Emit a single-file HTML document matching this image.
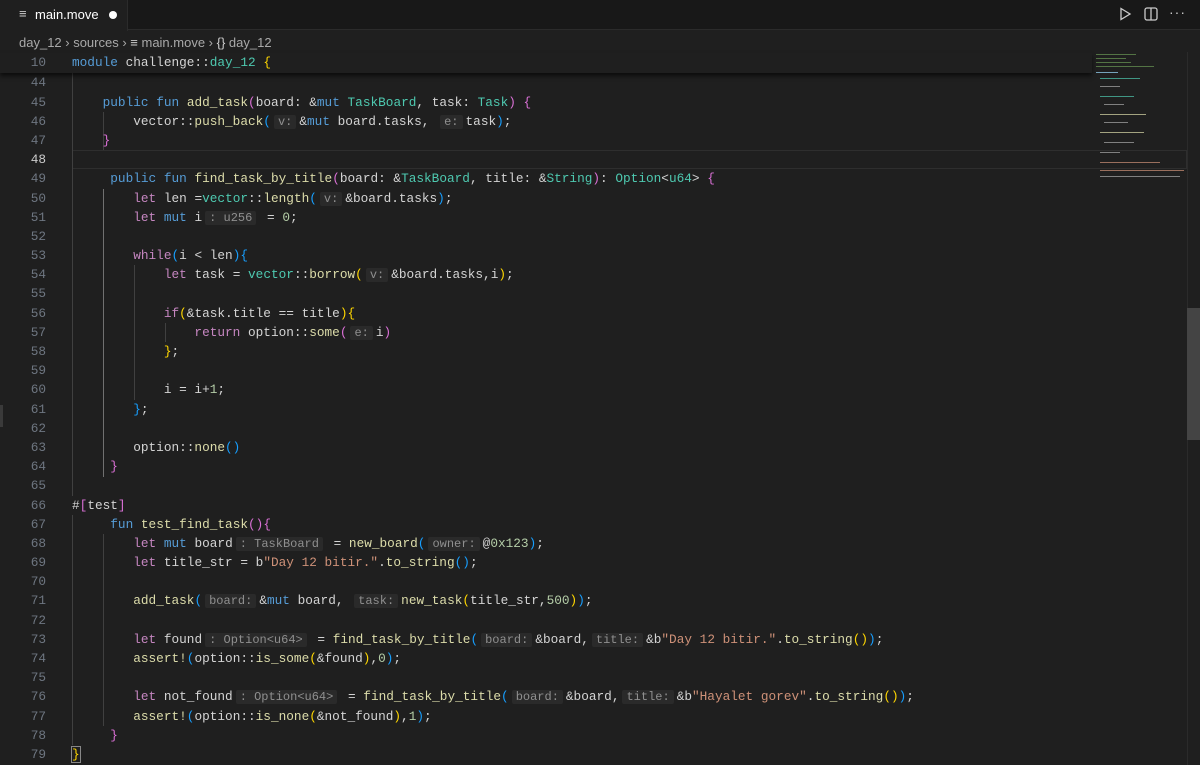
<!DOCTYPE html>
<html><head><meta charset="utf-8">
<style>
*{margin:0;padding:0;box-sizing:border-box}
html,body{width:1200px;height:765px;overflow:hidden}
body{background:#1f1f1f;position:relative;font-family:"Liberation Sans",sans-serif}
#tabbar{position:absolute;left:0;top:0;width:1200px;height:30px;background:#181818;border-bottom:1px solid #2b2b2b}
#tab{position:absolute;left:0;top:0;width:128px;height:31px;background:#1f1f1f;border-right:1px solid #2b2b2b;color:#fff;font-size:13px}
#crumb{position:absolute;left:19px;top:35px;font-size:13px;color:#a9a9a9;white-space:pre}
.code{font-family:"Liberation Mono",monospace;font-size:12.75px;color:#d4d4d4}
.row{height:19.2px;line-height:19.2px;white-space:pre}
#nums{position:absolute;left:0;width:46px;text-align:right;color:#6e7681}
#src{position:absolute;left:72px;width:1020px}
.k{color:#569cd6}.c{color:#c586c0}.f{color:#dcdcaa}.t{color:#4ec9b0}.n{color:#b5cea8}.s{color:#ce9178}
.b1{color:#ffd700}.b2{color:#da70d6}.b3{color:#179fff}
.h{color:#8f8f8f;background:#2a2a2a;font-size:12px;padding:0 4px;margin:0 3px;border-radius:2px}
.g{position:absolute;width:1px;background:#404040}
.gb{background:#707070}
</style></head><body>
<div id="tabbar"></div>
<div id="tab"><span style="position:absolute;left:19px;top:6px;color:#ccc;font-size:13px">≡</span><span style="position:absolute;left:35px;top:7px">main.move</span><span style="position:absolute;left:109px;top:11px;width:8px;height:8px;border-radius:50%;background:#fff"></span></div>
<svg style="position:absolute;left:1117px;top:6px" width="16" height="16" viewBox="0 0 16 16"><path d="M4 2.5 L13 8 L4 13.5 Z" fill="none" stroke="#ccc" stroke-width="1.3"/></svg>
<svg style="position:absolute;left:1143px;top:6px" width="16" height="16" viewBox="0 0 16 16"><rect x="2" y="2" width="12" height="12" rx="2" fill="none" stroke="#ccc" stroke-width="1.3"/><path d="M8 2V14" stroke="#ccc" stroke-width="1.3"/></svg>
<div style="position:absolute;left:1169px;top:4px;color:#ccc;font-size:14px;letter-spacing:1px">···</div>
<div id="crumb">day_12 › sources › <span style="color:#ccc">≡</span> main.move › <span style="color:#ccc">{}</span> day_12</div>

<div class="code row" style="position:absolute;left:0;top:52.5px;width:1092px;height:20px;box-shadow:0 3px 4px rgba(0,0,0,0.6);background:#1f1f1f;z-index:2"><span style="position:absolute;left:0;width:46px;text-align:right;color:#6e7681">10</span><span style="position:absolute;left:72px"><span class="k">module</span> challenge::<span class="t">day_12</span> <span class="b1">{</span></span></div>

<div style="position:absolute;left:72px;top:150.2px;width:1115px;height:19.2px;border:1px solid #2e2e2e"></div>

<div class="g" style="left:72px;top:73.4px;height:422.4px"></div>
<div class="g" style="left:72px;top:515px;height:230.4px"></div>
<div class="g" style="left:103px;top:111.8px;height:38.4px"></div>
<div class="g gb" style="left:103px;top:188.6px;height:288px"></div>
<div class="g" style="left:103px;top:534.2px;height:192px"></div>
<div class="g" style="left:134px;top:265.4px;height:134.4px"></div>
<div class="g" style="left:165px;top:323px;height:19.2px"></div>

<div id="nums" class="code" style="top:73.4px;color:#6e7681"><div class="row">44</div><div class="row">45</div><div class="row">46</div><div class="row">47</div><div class="row" style="color:#ccc">48</div><div class="row">49</div><div class="row">50</div><div class="row">51</div><div class="row">52</div><div class="row">53</div><div class="row">54</div><div class="row">55</div><div class="row">56</div><div class="row">57</div><div class="row">58</div><div class="row">59</div><div class="row">60</div><div class="row">61</div><div class="row">62</div><div class="row">63</div><div class="row">64</div><div class="row">65</div><div class="row">66</div><div class="row">67</div><div class="row">68</div><div class="row">69</div><div class="row">70</div><div class="row">71</div><div class="row">72</div><div class="row">73</div><div class="row">74</div><div class="row">75</div><div class="row">76</div><div class="row">77</div><div class="row">78</div><div class="row">79</div></div>

<div id="src" class="code" style="top:73.4px">
<div class="row"> </div>
<div class="row">    <span class="k">public</span> <span class="k">fun</span> <span class="f">add_task</span><span class="b2">(</span>board: &amp;<span class="k">mut</span> <span class="t">TaskBoard</span>, task: <span class="t">Task</span><span class="b2">)</span> <span class="b2">{</span></div>
<div class="row">        vector::<span class="f">push_back</span><span class="b3">(</span><span class="h">v:</span>&amp;<span class="k">mut</span> board.tasks, <span class="h">e:</span>task<span class="b3">)</span>;</div>
<div class="row">    <span class="b2">}</span></div>
<div class="row"> </div>
<div class="row">     <span class="k">public</span> <span class="k">fun</span> <span class="f">find_task_by_title</span><span class="b2">(</span>board: &amp;<span class="t">TaskBoard</span>, title: &amp;<span class="t">String</span><span class="b2">)</span>: <span class="t">Option</span>&lt;<span class="t">u64</span>&gt; <span class="b2">{</span></div>
<div class="row">        <span class="c">let</span> len =<span class="t">vector</span>::<span class="f">length</span><span class="b3">(</span><span class="h">v:</span>&amp;board.tasks<span class="b3">)</span>;</div>
<div class="row">        <span class="c">let</span> <span class="k">mut</span> i<span class="h">: u256</span> = <span class="n">0</span>;</div>
<div class="row"> </div>
<div class="row">        <span class="c">while</span><span class="b3">(</span>i &lt; len<span class="b3">){</span></div>
<div class="row">            <span class="c">let</span> task = <span class="t">vector</span>::<span class="f">borrow</span><span class="b1">(</span><span class="h">v:</span>&amp;board.tasks,i<span class="b1">)</span>;</div>
<div class="row"> </div>
<div class="row">            <span class="c">if</span><span class="b1">(</span>&amp;task.title == title<span class="b1">){</span></div>
<div class="row">                <span class="c">return</span> option::<span class="f">some</span><span class="b2">(</span><span class="h">e:</span>i<span class="b2">)</span></div>
<div class="row">            <span class="b1">}</span>;</div>
<div class="row"> </div>
<div class="row">            i = i+<span class="n">1</span>;</div>
<div class="row">        <span class="b3">}</span>;</div>
<div class="row"> </div>
<div class="row">        option::<span class="f">none</span><span class="b3">()</span></div>
<div class="row">     <span class="b2">}</span></div>
<div class="row"> </div>
<div class="row">#<span class="b2">[</span>test<span class="b2">]</span></div>
<div class="row">     <span class="k">fun</span> <span class="f">test_find_task</span><span class="b2">(){</span></div>
<div class="row">        <span class="c">let</span> <span class="k">mut</span> board<span class="h">: TaskBoard</span> = <span class="f">new_board</span><span class="b3">(</span><span class="h">owner:</span>@<span class="n">0x123</span><span class="b3">)</span>;</div>
<div class="row">        <span class="c">let</span> title_str = b<span class="s">"Day 12 bitir."</span>.<span class="f">to_string</span><span class="b3">()</span>;</div>
<div class="row"> </div>
<div class="row">        <span class="f">add_task</span><span class="b3">(</span><span class="h">board:</span>&amp;<span class="k">mut</span> board, <span class="h">task:</span><span class="f">new_task</span><span class="b1">(</span>title_str,<span class="n">500</span><span class="b1">)</span><span class="b3">)</span>;</div>
<div class="row"> </div>
<div class="row">        <span class="c">let</span> found<span class="h">: Option&lt;u64&gt;</span> = <span class="f">find_task_by_title</span><span class="b3">(</span><span class="h">board:</span>&amp;board,<span class="h">title:</span>&amp;b<span class="s">"Day 12 bitir."</span>.<span class="f">to_string</span><span class="b1">()</span><span class="b3">)</span>;</div>
<div class="row">        <span class="f">assert!</span><span class="b3">(</span>option::<span class="f">is_some</span><span class="b1">(</span>&amp;found<span class="b1">)</span>,<span class="n">0</span><span class="b3">)</span>;</div>
<div class="row"> </div>
<div class="row">        <span class="c">let</span> not_found<span class="h">: Option&lt;u64&gt;</span> = <span class="f">find_task_by_title</span><span class="b3">(</span><span class="h">board:</span>&amp;board,<span class="h">title:</span>&amp;b<span class="s">"Hayalet gorev"</span>.<span class="f">to_string</span><span class="b1">()</span><span class="b3">)</span>;</div>
<div class="row">        <span class="f">assert!</span><span class="b3">(</span>option::<span class="f">is_none</span><span class="b1">(</span>&amp;not_found<span class="b1">)</span>,<span class="n">1</span><span class="b3">)</span>;</div>
<div class="row">     <span class="b2">}</span></div>
<div class="row"><span class="b1" style="outline:1px solid #888">}</span></div>
</div>

<div style="position:absolute;left:0;top:405px;width:3px;height:22px;background:#3a3a3a"></div>

<div style="position:absolute;left:1096px;top:52px;width:90px;height:140px;opacity:0.7">
<div style="position:absolute;left:0;top:2px;width:40px;height:1px;background:#6a9955"></div>
<div style="position:absolute;left:0;top:6px;width:30px;height:1px;background:#6a9955"></div>
<div style="position:absolute;left:0;top:10px;width:35px;height:1px;background:#6a9955"></div>
<div style="position:absolute;left:0;top:14px;width:58px;height:1px;background:#6a9955"></div>
<div style="position:absolute;left:0;top:20px;width:22px;height:1px;background:#9cdcfe"></div>
<div style="position:absolute;left:4px;top:26px;width:40px;height:1px;background:#4ec9b0"></div>
<div style="position:absolute;left:4px;top:34px;width:20px;height:1px;background:#aaa"></div>
<div style="position:absolute;left:4px;top:44px;width:34px;height:1px;background:#4ec9b0"></div>
<div style="position:absolute;left:8px;top:52px;width:20px;height:1px;background:#aaa"></div>
<div style="position:absolute;left:4px;top:62px;width:46px;height:1px;background:#dcdcaa"></div>
<div style="position:absolute;left:8px;top:70px;width:24px;height:1px;background:#aaa"></div>
<div style="position:absolute;left:4px;top:80px;width:44px;height:1px;background:#dcdcaa"></div>
<div style="position:absolute;left:8px;top:90px;width:30px;height:1px;background:#aaa"></div>
<div style="position:absolute;left:4px;top:100px;width:20px;height:1px;background:#aaa"></div>
<div style="position:absolute;left:4px;top:110px;width:60px;height:1px;background:#ce9178"></div>
<div style="position:absolute;left:4px;top:118px;width:84px;height:1px;background:#ce9178"></div>
<div style="position:absolute;left:4px;top:124px;width:80px;height:1px;background:#aaa"></div>
</div>

<div style="position:absolute;left:1187px;top:52px;width:1px;height:713px;background:#2b2b2b"></div>
<div style="position:absolute;left:1187px;top:308px;width:13px;height:132px;background:#444"></div>
</body></html>
